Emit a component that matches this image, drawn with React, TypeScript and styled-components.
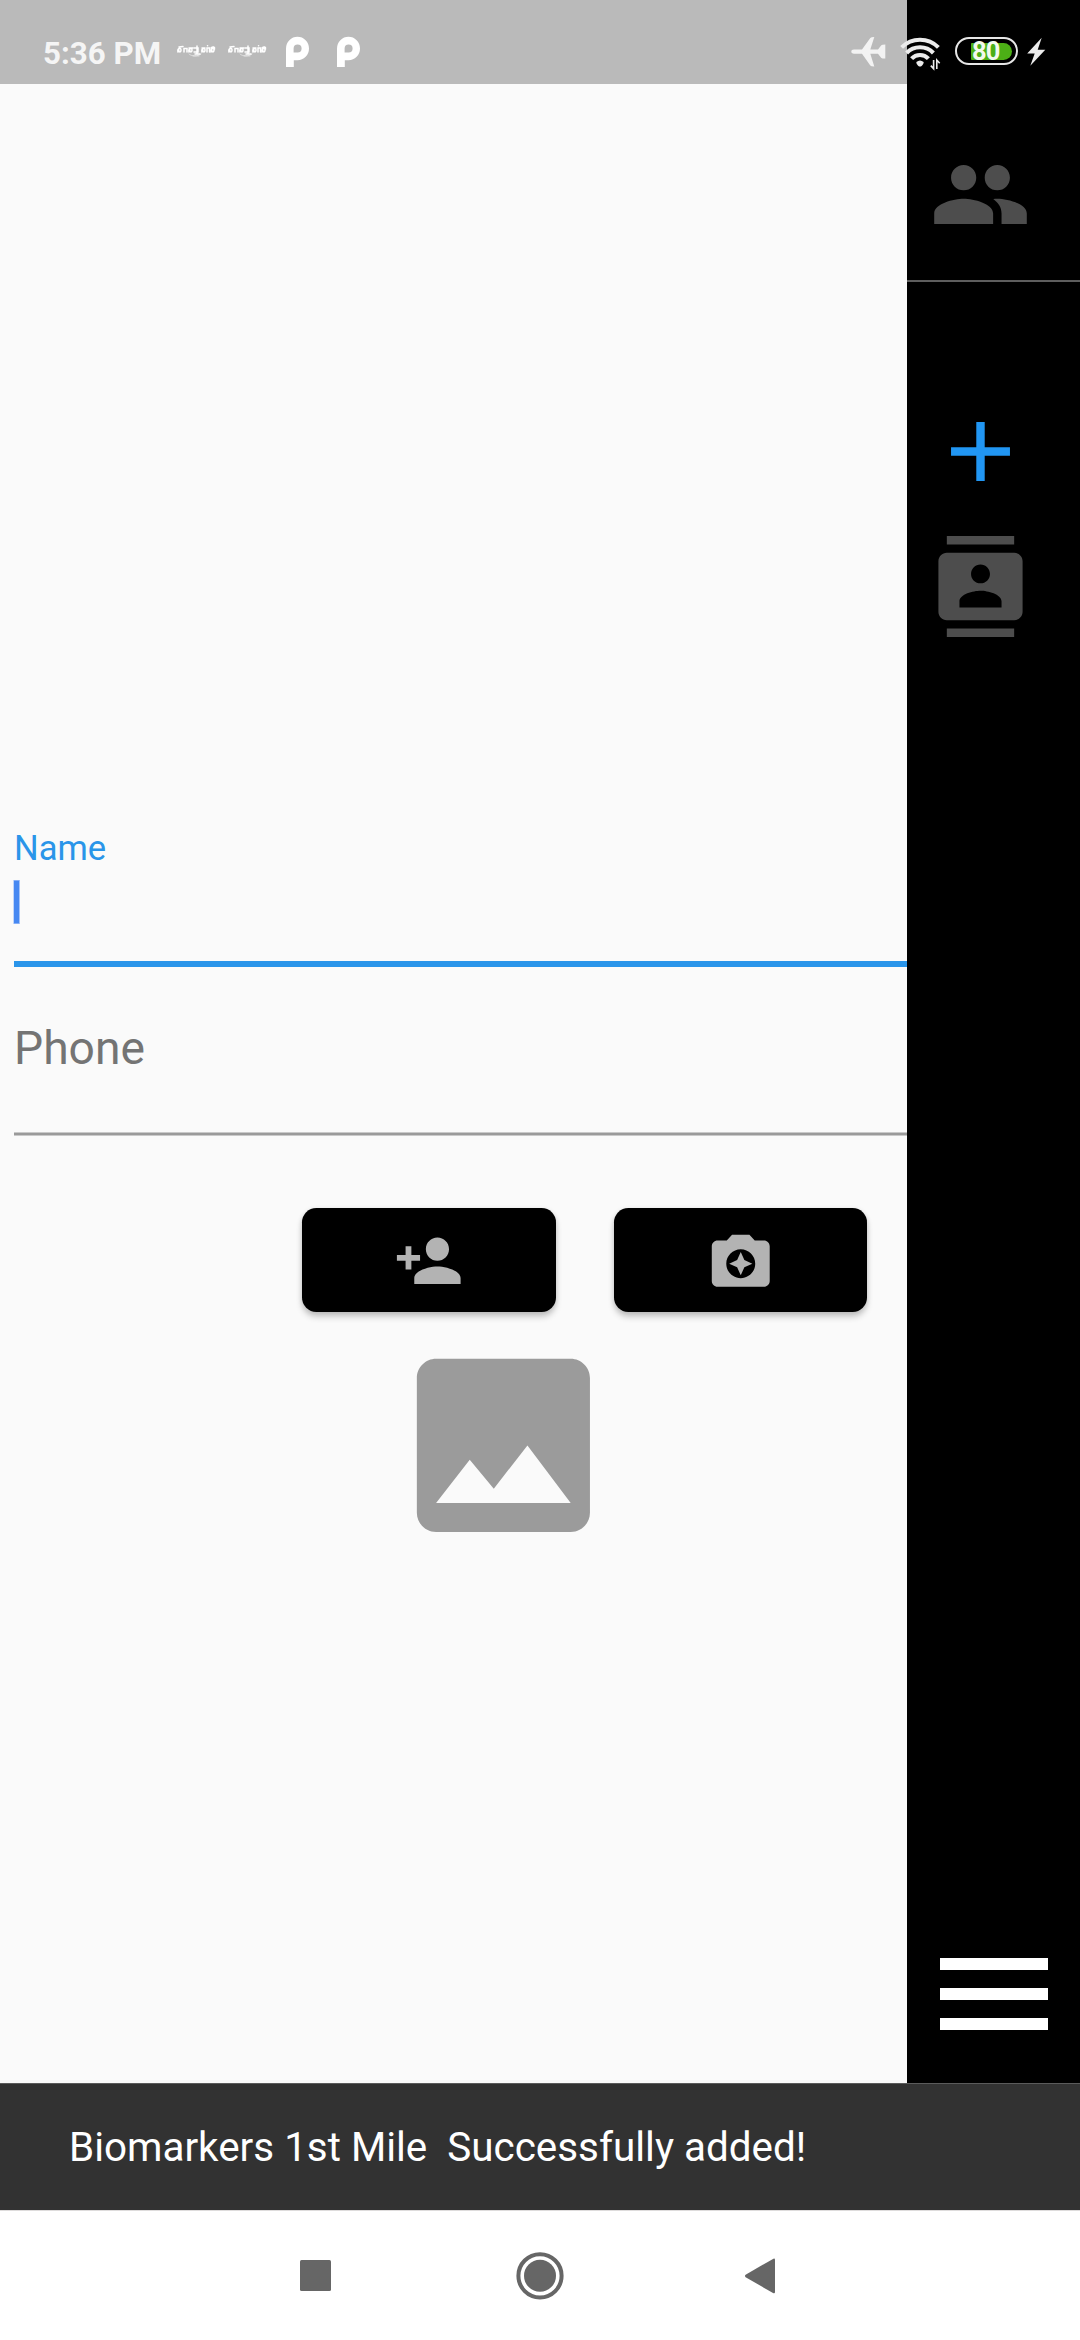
import React from "react";
import styled, { createGlobalStyle } from "styled-components";

const GlobalStyle = createGlobalStyle`
  * { box-sizing: border-box; }
  html, body { margin: 0; padding: 0; background: #fafafa; }
  svg { display: block; flex: none; }
`;

const Screen = styled.div`
  position: relative;
  display: flex;
  flex-direction: column;
  width: 1080px;
  height: 2340px;
  overflow: hidden;
  background: #fafafa;
  font-family: Roboto, "Noto Sans", sans-serif;
`;

const StatusBar = styled.header`
  position: absolute;
  inset: 0 0 auto 0;
  z-index: 2;
  height: 84px;
  padding: 0 32px 0 43px;
  display: flex;
  justify-content: space-between;
  background: rgba(0, 0, 0, 0.255);
`;

const StatusGroup = styled.div`
  display: flex;
  align-items: flex-start;
  padding-top: 34px;
`;

const Clock = styled.time`
  width: 133px;
  padding-top: 1px;
  font-size: 31.3px;
  line-height: 38px;
  font-weight: 700;
  color: #f5f5f5;
  white-space: nowrap;
`;

const NotificationIcon = styled.svg`
  width: 51px;
  height: 36px;
`;

const SystemIcon = styled.svg<{ $w: number; $gap: number }>`
  width: ${(p) => p.$w}px;
  height: 38px;
  margin-right: ${(p) => p.$gap}px;
`;

const Battery = styled.div`
  width: 63px;
  height: 28px;
  margin: 3px 9px 0 0;
  padding: 0 4px 0 14px;
  display: flex;
  align-items: center;
  border: 2px solid #e6e6e6;
  border-radius: 14px;
`;

const BatteryLevel = styled.div`
  display: flex;
  align-items: center;
  width: 41px;
  height: 17px;
  padding-left: 1px;
  border-radius: 1px 9px 9px 1px;
  background: #4caf16;
  color: #f3faee;
  font-size: 25.5px;
  font-weight: 700;
  letter-spacing: -0.8px;
  line-height: 17px;
`;

const Body = styled.div`
  display: flex;
  height: 2083px;
  flex: none;
`;

const Main = styled.main`
  width: 907px;
  padding: 828px 0 0 14px;
  overflow: hidden;
`;

const Label = styled.label`
  display: block;
  height: 40px;
  line-height: 40px;
  font-size: 34.6px;
  color: #2a95e9;
`;

const Caret = styled.div`
  width: 5px;
  height: 44px;
  margin-top: 12px;
  background: #4688f2;
  border: solid #86aff6;
  border-width: 1px 0;
  box-shadow: -1px 0 #c0d5fa, 1px 0 #a5c3f8;
`;

const FocusLine = styled.div`
  height: 6px;
  margin-top: 37px;
  background: #2a95ea;
`;

const Placeholder = styled.div`
  margin-top: 54px;
  height: 54px;
  line-height: 54px;
  font-size: 46.2px;
  color: #747474;
`;

const IdleLine = styled.div`
  height: 4px;
  margin-top: 57px;
  background: #9a9a9a;
  border: solid #c9c9c9;
  border-width: 1px 0;
`;

const Actions = styled.div`
  display: flex;
  gap: 57.5px;
  padding: 72.3px 0 0 288.4px;
`;

const ActionButton = styled.button`
  display: flex;
  align-items: center;
  justify-content: center;
  width: 253.7px;
  height: 104.2px;
  padding: 0;
  border: 0;
  border-radius: 14.4px;
  background: #000;
  box-shadow: 0 5px 6px rgba(0, 0, 0, 0.2), 0 1px 5px rgba(0, 0, 0, 0.1);
`;

const Icon = styled.svg<{ $size: number; $color: string }>`
  width: ${(p) => p.$size}px;
  height: ${(p) => p.$size}px;
  fill: ${(p) => p.$color};
`;

const Preview = styled.div`
  padding: 17.2px 0 0 374.4px;
`;

const Sidebar = styled.aside`
  display: flex;
  flex-direction: column;
  width: 173px;
  background: #000;
`;

const SidebarTop = styled.div`
  height: 282px;
  padding: 144px 0 0 22.7px;
  border-bottom: 2px solid #5e5e5e;
`;

const SidebarItems = styled.nav`
  display: flex;
  flex-direction: column;
  gap: 34px;
  padding: 119px 0 0 22.7px;
`;

const MenuButton = styled.div`
  display: flex;
  flex-direction: column;
  gap: 18px;
  margin: auto 0 53px 32.5px;
`;

const MenuBar = styled.span`
  width: 108px;
  height: 12px;
  background: #fff;
`;

const Snackbar = styled.div`
  position: relative;
  flex: none;
  height: 127px;
  padding: 1px 69px 0;
  border-top: 1px solid rgba(51, 51, 51, 0.8);
  background: #323232;
  background-clip: padding-box;
  color: #fff;
  font-size: 40.4px;
  line-height: 126px;
  white-space: pre;
`;

const NavBar = styled.nav`
  display: flex;
  flex: 1;
  align-items: flex-start;
  border-top: 1px solid #dedcdc;
  background: #fff;
  padding: 40px 0 0 290px;
  gap: 175px;
`;

const NavIcon = styled.svg`
  width: 50px;
  height: 50px;
  fill: #666;
`;

function DailyLogo() {
  return (
    <NotificationIcon viewBox="176 34 51 36" fill="none" stroke="#fff" strokeWidth="1.5" strokeLinecap="round">
      <path d="M178 52c-1-4 3-5 3-2s-3 2-2 0M179 47l4-.5M184 52v-3.500h3V52M189 52c-1-4 3-5 3-2s-3 2-2 0M189 48h4" />
      <path d="M194 48h4v4h-4M197 46v8M195 54h5M202 52c-1-4 3-5 3-2s-3 2-2 0M202 48h3M207 52v-4h2.500v4M207.500 45.800h.1" />
      <path d="M211 52c-1-4 3-5 3-2s-3 2-2 0M211 48c2-2 4-1 3.500 1" />
      <path d="M189 54c2 2.500 9 2.500 12 0M193 56h6" strokeWidth=".7" opacity=".7" />
    </NotificationIcon>
  );
}

function PLogo() {
  return (
    <NotificationIcon viewBox="278 34 51 36" fill="#fff">
      <path
        fillRule="evenodd"
        d="M286 67V48.5A11.5 11.8 0 0 1 309 48.5 11.5 11.8 0 0 1 297.500 60.300H293.800V67ZM293.600 52.600H297.600A4 4 0 1 0 293.600 48.600Z"
      />
    </NotificationIcon>
  );
}

export default function App() {
  return (
    <Screen>
      <GlobalStyle />
      <StatusBar>
        <StatusGroup>
          <Clock>5:36 PM</Clock>
          <DailyLogo />
          <DailyLogo />
          <PLogo />
          <PLogo />
        </StatusGroup>
        <StatusGroup>
          <SystemIcon $w={35} $gap={13} viewBox="850.5 34 35 38" fill="#f3f3f3">
            <path d="M850.8 51.6Q850.8 49.5 853.5 49.5H861.5L869.8 38Q870.5 37 873.8 37L869.8 49.5H877.5L880.8 45.3Q881.500 44.600 884.800 44.600V58.600Q881.500 58.600 880.800 57.900L877.500 53.700H869.800L873.800 66.400Q870.500 66.400 869.800 65.400L861.500 53.700H853.500Q850.800 53.700 850.800 51.600Z" />
          </SystemIcon>
          <SystemIcon $w={42} $gap={14} viewBox="899 34 42 38" fill="none" stroke="#ececec" strokeWidth="4.1">
            <path d="M901.6 47.4A26 26 0 0 1 938.4 47.4" />
            <path d="M906.6 53A18.6 18.6 0 0 1 933.4 53" />
            <path d="M911.6 58.6A11.5 11.5 0 0 1 928.4 58.6" />
            <path d="M916.4 62Q920 58.9 923.6 62C924 64 921.5 66.6 920 66.6S916 64 916.4 62Z" fill="#ececec" stroke="none" />
            <path d="M933.6 60V68.6L930.8 65.6M936.8 69V60L939.7 63.2" strokeWidth="1.6" />
          </SystemIcon>
          <Battery>
            <BatteryLevel>80</BatteryLevel>
          </Battery>
          <SystemIcon $w={21} $gap={0} viewBox="1027 34 21 38" fill="#ececec">
            <path d="M1041.7 37.7L1027.2 53.5H1034.7L1030.3 65.8L1045.3 49.8H1037.7Z" />
          </SystemIcon>
        </StatusGroup>
      </StatusBar>

      <Body>
        <Main>
          <Label>Name</Label>
          <Caret />
          <FocusLine />
          <Placeholder>Phone</Placeholder>
          <IdleLine />
          <Actions>
            <ActionButton aria-label="Add contact">
              <Icon $size={69.5} $color="#b3b3b3" viewBox="0 0 24 24">
                <path d="M15 12c2.21 0 4-1.79 4-4s-1.79-4-4-4-4 1.79-4 4 1.79 4 4 4zm-9-2V7H4v3H1v2h3v3h2v-3h3v-2H6zm9 4c-2.67 0-8 1.34-8 4v2h16v-2c0-2.66-5.33-4-8-4z" />
              </Icon>
            </ActionButton>
            <ActionButton aria-label="Take photo">
              <Icon $size={69.5} $color="#b3b3b3" viewBox="0 0 24 24">
                <path d="M9 3L7.17 5H4c-1.1 0-2 .9-2 2v12c0 1.1.9 2 2 2h16c1.1 0 2-.9 2-2V7c0-1.1-.9-2-2-2h-3.17L15 3H9zm3 15c-2.76 0-5-2.24-5-5s2.24-5 5-5 5 2.24 5 5-2.24 5-5 5zm0-1l1.25-2.75L16 13l-2.75-1.25L12 9l-1.25 2.75L8 13l2.75 1.25z" />
              </Icon>
            </ActionButton>
          </Actions>
          <Preview>
            <Icon $size={230.8} $color="#9b9b9b" viewBox="0 0 24 24">
              <path d="M21 19V5c0-1.1-.9-2-2-2H5c-1.1 0-2 .9-2 2v14c0 1.1.9 2 2 2h14c1.1 0 2-.9 2-2zM8.5 13.5l2.5 3.01L14.5 12l4.5 6H5l3.5-4.5z" />
            </Icon>
          </Preview>
        </Main>
        <Sidebar>
          <SidebarTop>
            <Icon $size={101} $color="#4d4d4d" viewBox="0 0 24 24">
              <path d="M16 11c1.66 0 2.99-1.34 2.99-3S17.66 5 16 5c-1.66 0-3 1.34-3 3s1.34 3 3 3zm-8 0c1.66 0 2.99-1.34 2.99-3S9.66 5 8 5C6.34 5 5 6.34 5 8s1.34 3 3 3zm0 2c-2.33 0-7 1.17-7 3.5V19h14v-2.5c0-2.33-4.67-3.5-7-3.5zm8 0c-.29 0-.62.02-.97.05 1.16.84 1.97 1.97 1.97 3.45V19h6v-2.5c0-2.33-4.67-3.5-7-3.5z" />
            </Icon>
          </SidebarTop>
          <SidebarItems>
            <Icon $size={101} $color="#2196f3" viewBox="0 0 24 24">
              <path d="M19 13h-6v6h-2v-6H5v-2h6V5h2v6h6v2z" />
            </Icon>
            <Icon $size={101} $color="#4d4d4d" viewBox="0 0 24 24">
              <path d="M20 0H4v2h16V0zM4 24h16v-2H4v2zM20 4H4c-1.1 0-2 .9-2 2v12c0 1.1.9 2 2 2h16c1.1 0 2-.9 2-2V6c0-1.1-.9-2-2-2zm-8 2.75c1.24 0 2.25 1.01 2.25 2.25s-1.01 2.25-2.25 2.25S9.75 10.24 9.75 9s1.01-2.25 2.25-2.25zM17 17H7v-1.5c0-1.67 3.33-2.5 5-2.5s5 .83 5 2.5V17z" />
            </Icon>
          </SidebarItems>
          <MenuButton>
            <MenuBar />
            <MenuBar />
            <MenuBar />
          </MenuButton>
        </Sidebar>
      </Body>

      <Snackbar>{"Biomarkers 1st Mile  Successfully added!"}</Snackbar>
      <NavBar>
        <NavIcon viewBox="290 2251 50 50">
          <rect x="300" y="2260" width="31" height="31" rx="1.5" />
        </NavIcon>
        <NavIcon viewBox="515 2251 50 50">
          <circle cx="540" cy="2275.8" r="21.6" fill="none" stroke="#666" strokeWidth="4" />
          <circle cx="540" cy="2275.8" r="16" />
        </NavIcon>
        <NavIcon viewBox="740 2251 50 50">
          <path d="M745.6 2274.8L773 2258.9Q775 2258 775 2260V2292Q775 2294 773 2293L745.6 2277.2Q744.4 2276 745.6 2274.8Z" />
        </NavIcon>
      </NavBar>
    </Screen>
  );
}
